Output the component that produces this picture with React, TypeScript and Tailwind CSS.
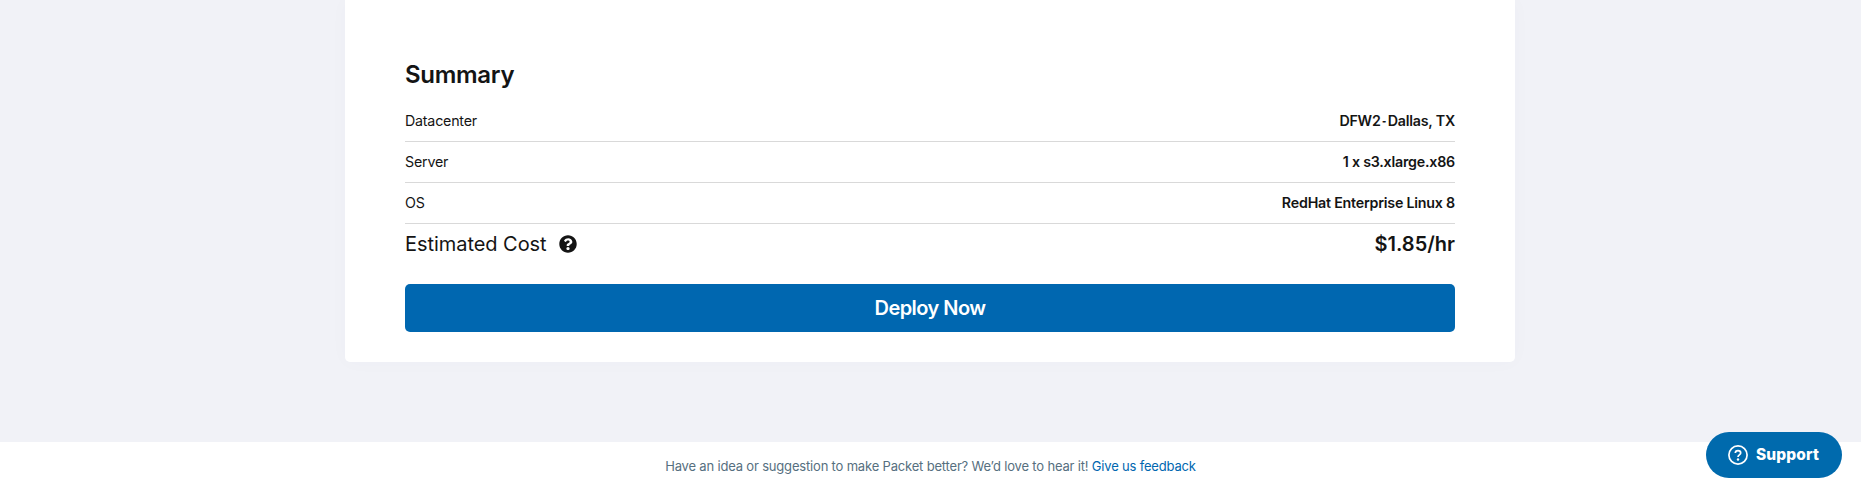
import { FaQuestionCircle } from "react-icons/fa";

const rows = [
  { label: "Datacenter", value: <>DFW2 <span className="-mx-[3px] inline-block scale-x-65">-</span> Dallas, TX</> },
  { label: "Server", value: "1 x s3.xlarge.x86" },
  { label: "OS", value: "RedHat Enterprise Linux 8" },
];

function SupportIcon() {
  return (
    <svg viewBox="0 0 20 20" className="size-5 shrink-0" fill="none" stroke="currentColor" strokeWidth="1.7">
      <circle cx="10" cy="10" r="9.1" />
      <path d="M7.3 8.1C7.3 6.5 8.5 5.6 10 5.6s2.7.9 2.7 2.4c0 1.9-2.7 1.9-2.7 4" />
      <circle cx="10" cy="14.5" r="1.2" fill="currentColor" stroke="none" />
    </svg>
  );
}

export default function App() {
  return (
    <div className="flex h-[489px] flex-col overflow-hidden bg-[#f1f2f7] font-['Inter',sans-serif] text-[#141414]">
      <main className="w-[1860px] flex-1">
        <section className="mx-auto h-[362px] w-[1170px] rounded-b-[5px] bg-white px-[60px] pt-[59px] shadow-[0_0_20px_rgba(60,70,120,0.025)]">
          <h2 className="text-2xl font-semibold leading-8 tracking-[-0.3px]">Summary</h2>
          <dl className="mt-[10px]">
            {rows.map(({ label, value }) => (
              <div key={label} className="flex h-[41px] items-center justify-between border-b border-[#d9d9d9] text-[14.25px] tracking-[-0.22px]">
                <dt>{label}</dt>
                <dd className="font-semibold">{value}</dd>
              </div>
            ))}
          </dl>
          <div className="flex h-[39px] items-center justify-between text-xl">
            <span className="flex items-center gap-3 tracking-[-0.05px]">
              Estimated Cost <FaQuestionCircle className="size-[18px]" />
            </span>
            <span className="font-semibold">$1.85/hr</span>
          </div>
          <button className="mt-[21px] block h-12 w-full rounded-[5px] bg-[#0067b0] text-xl font-semibold tracking-[-0.55px] text-white">
            Deploy Now
          </button>
        </section>
      </main>
      <footer className="h-[47px] w-[1860px] min-w-full bg-white pt-px text-center text-[13px] leading-[47px] tracking-[-0.18px] text-[#566f80]">
        Have an idea or suggestion to make Packet better? We’d love to hear it!{" "}
        <a className="text-[#0067b0]">Give us feedback</a>
      </footer>
      <button className="fixed right-[19px] bottom-[11px] flex h-[46px] w-[136px] items-center gap-2 rounded-full bg-[#006aad] pl-[22px] text-[15.5px] font-extrabold tracking-[0.1px] text-white">
        <SupportIcon />
        Support
      </button>
    </div>
  );
}
